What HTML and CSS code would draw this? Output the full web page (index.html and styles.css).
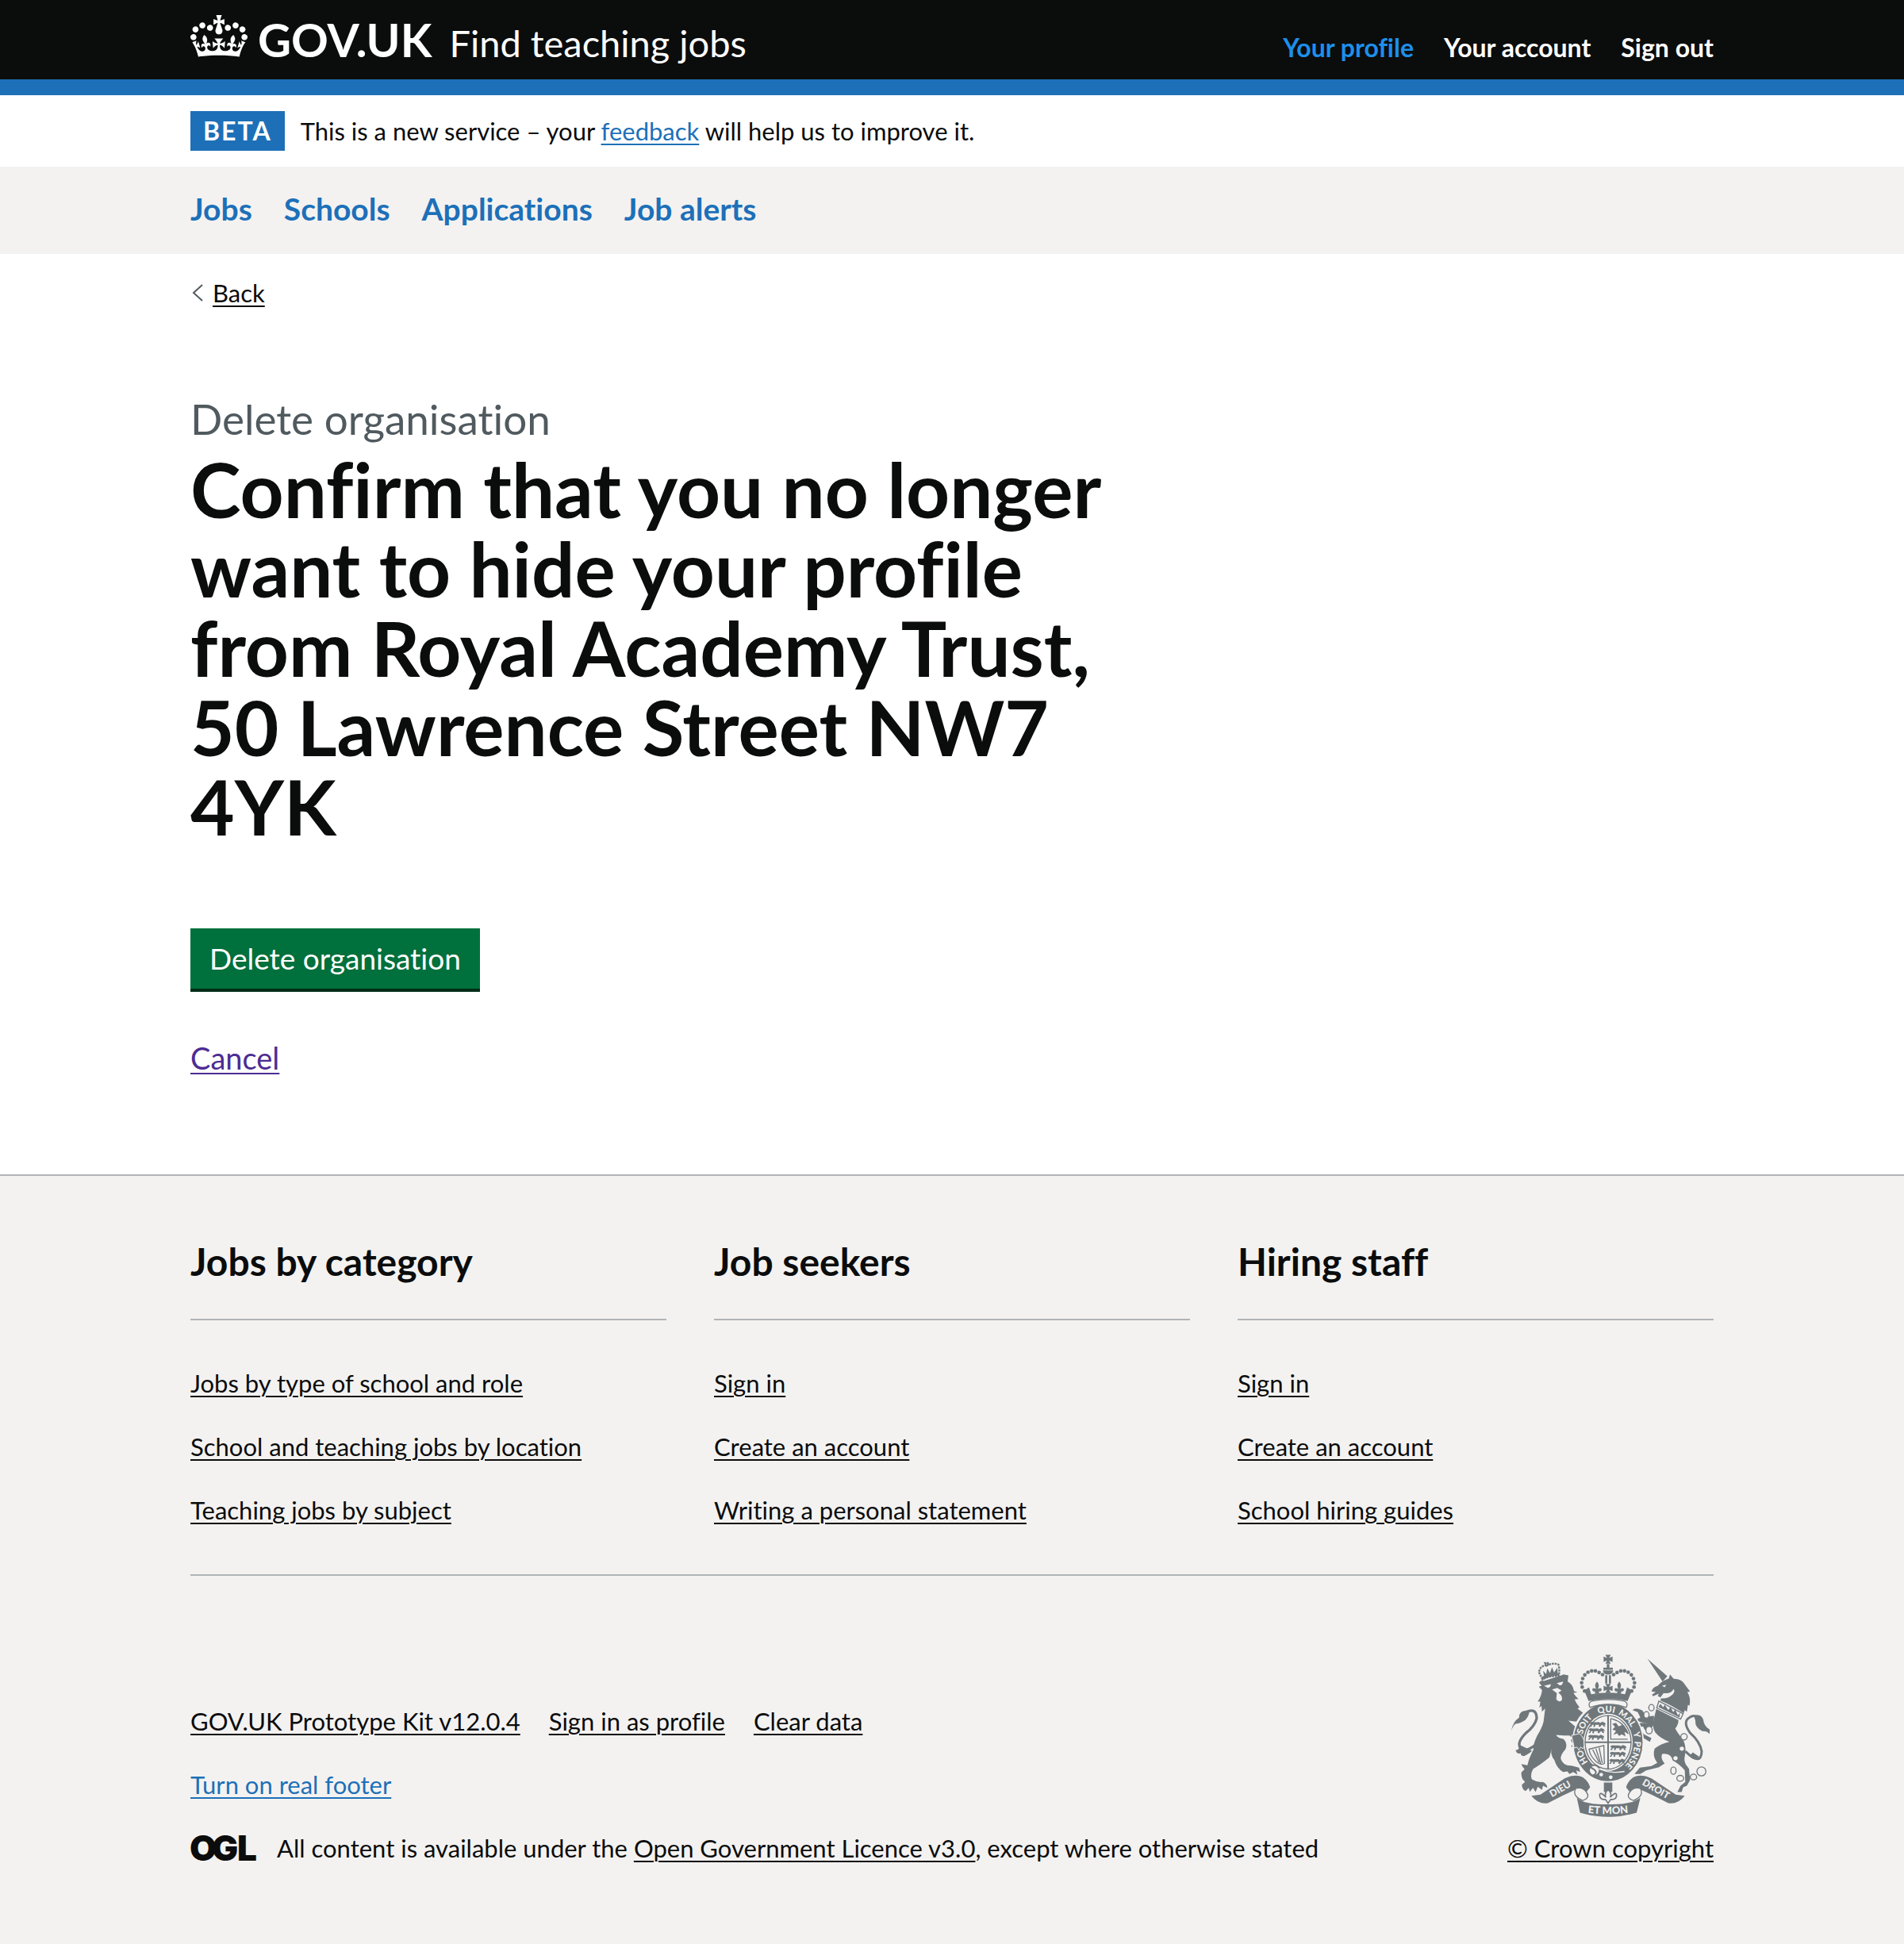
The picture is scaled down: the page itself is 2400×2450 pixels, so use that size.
FILE: index.html
```html
<!DOCTYPE html>
<html lang="en">
<head>
<meta charset="utf-8">
<meta name="viewport" content="width=device-width, initial-scale=1">
<title>Delete organisation – Find teaching jobs</title>
<link rel="stylesheet" href="styles.css">
</head>
<body>
<header class="header">
  <div class="container header-row">
    <a class="logo" href="#">
      <svg class="logo-crown" viewBox="0 0 132 97" aria-hidden="true" fill="currentColor"><path d="M25 30.2c3.5 1.5 7.7-.2 9.1-3.7 1.5-3.6-.2-7.8-3.9-9.2-3.6-1.4-7.6.3-9.1 3.9-1.4 3.5.3 7.5 3.9 9zM9 39.5c3.6 1.5 7.8-.2 9.2-3.7 1.5-3.6-.2-7.8-3.9-9.1-3.6-1.5-7.6.2-9.1 3.8-1.4 3.5.3 7.5 3.8 9zM4.4 57.2c3.5 1.5 7.7-.2 9.1-3.8 1.5-3.6-.2-7.7-3.9-9.1-3.5-1.5-7.6.3-9.1 3.8-1.4 3.5.3 7.6 3.9 9.1zm38.3-21.4c3.5 1.5 7.7-.2 9.1-3.8 1.5-3.6-.2-7.7-3.9-9.1-3.6-1.5-7.6.3-9.1 3.8-1.3 3.6.4 7.7 3.9 9.1zm64.4-5.6c-3.6 1.5-7.8-.2-9.1-3.7-1.5-3.6.2-7.8 3.8-9.2 3.6-1.4 7.7.3 9.2 3.9 1.3 3.5-.4 7.5-3.9 9zm15.9 9.3c-3.6 1.5-7.7-.2-9.1-3.7-1.5-3.6.2-7.8 3.7-9.1 3.6-1.5 7.7.2 9.2 3.8 1.5 3.5-.3 7.5-3.8 9zm4.7 17.7c-3.6 1.5-7.8-.2-9.2-3.8-1.5-3.6.2-7.7 3.9-9.1 3.6-1.5 7.7.3 9.2 3.8 1.3 3.5-.4 7.6-3.9 9.1zM89.3 35.8c-3.6 1.5-7.8-.2-9.2-3.8-1.4-3.6.2-7.7 3.9-9.1 3.6-1.5 7.7.3 9.2 3.8 1.4 3.6-.3 7.7-3.9 9.1zM69.7 17.7l8.9 4.7V9.3l-8.9 2.8c-.2-.3-.5-.6-.9-.9L72.4 0H59.6l3.5 11.2c-.3.3-.6.5-.9.9l-8.8-2.8v13.1l8.8-4.7c.3.3.6.7.9.9l-5 15.4v.1c-.2.8-.4 1.6-.4 2.4 0 4.1 3.1 7.5 7 8.1h.2c.3 0 .7.1 1 .1.4 0 .7 0 1-.1h.2c4-.6 7.1-4.1 7.1-8.1 0-.8-.1-1.7-.4-2.4V34l-5.1-15.4c.4-.2.7-.6 1-.9zM66 92.8c16.9 0 32.8 1.1 47.1 3.2 4-16.9 8.9-26.7 14-33.5l-9.6-3.4c1 4.9 1.1 7.2 0 10.2-1.5-1.4-3-4.3-4.2-8.7L108.6 76c2.8-2 5-3.2 7.5-3.3-4.4 9.4-10 11.9-13.6 11.2-4.3-.8-6.3-4.6-5.6-7.9 1-4.7 5.7-5.9 8-.5 4.3-8.7-3-11.4-7.6-8.8 7.1-7.2 7.9-13.5 2.1-21.1-8 6.1-8.1 12.3-4.5 20.8-4.7-5.4-12.1-2.5-9.5 6.2 3.4-5.2 7.9-2 7.2 3.1-.6 4.3-6.4 7.8-13.5 7.2-10.3-.9-10.9-8-11.2-13.8 2.5-.5 7.1 1.8 11 7.3L80.2 60c-4.1 4.4-8 5.3-12.3 5.4 1.4-4.4 8-11.6 8-11.6H55.5s6.4 7.2 7.9 11.6c-4.2-.1-8-1-12.3-5.4l1.4 16.4c3.9-5.5 8.5-7.7 10.9-7.3-.3 5.8-.9 12.8-11.1 13.8-7.2.6-12.9-2.9-13.5-7.2-.7-5 3.8-8.3 7.1-3.1 2.7-8.7-4.6-11.6-9.4-6.2 3.7-8.5 3.6-14.7-4.6-20.8-5.8 7.6-5 13.9 2.2 21.1-4.7-2.6-11.9.1-7.7 8.8 2.3-5.5 7.1-4.2 8.1.5.7 3.3-1.3 7.1-5.7 7.9-3.5.7-9-1.8-13.5-11.2 2.5.1 4.7 1.3 7.5 3.3l-4.7-15.4c-1.2 4.4-2.7 7.2-4.3 8.7-1.1-3-.9-5.3 0-10.2l-9.5 3.4c5 6.9 9.9 16.7 14 33.5 14.8-2.1 30.8-3.2 47.7-3.2z"/></svg>
      <span class="logo-text">GOV.UK</span>
    </a>
    <a class="service-name" href="#">Find teaching jobs</a>
    <nav class="account-nav" aria-label="Account">
      <a class="account-link account-link-current" href="#">Your profile</a>
      <a class="account-link" href="#">Your account</a>
      <a class="account-link" href="#">Sign out</a>
    </nav>
  </div>
</header>

<div class="container phase-banner">
  <strong class="tag">BETA</strong>
  <span>This is a new service – your <a class="link" href="#">feedback</a> will help us to improve it.</span>
</div>

<nav class="primary-nav" aria-label="Primary">
  <div class="container primary-nav-row">
    <a class="primary-link" href="#">Jobs</a>
    <a class="primary-link" href="#">Schools</a>
    <a class="primary-link" href="#">Applications</a>
    <a class="primary-link" href="#">Job alerts</a>
  </div>
</nav>

<div class="container">
  <div class="back">
    <svg class="back-icon" viewBox="0 0 14 22" aria-hidden="true"><path d="M13 1 2 11l11 10" fill="none" stroke="#505a5f" stroke-width="2"/></svg>
    <a class="link link-plain" href="#">Back</a>
  </div>
  <main class="main">
    <p class="caption">Delete organisation</p>
    <h1 class="title">Confirm that you no longer want to hide your profile from Royal Academy Trust, 50 Lawrence Street NW7 4YK</h1>
    <button class="button" type="button">Delete organisation</button>
    <p class="cancel"><a class="link link-visited" href="#">Cancel</a></p>
  </main>
</div>

<footer class="footer">
  <div class="container">
    <div class="footer-nav">
      <section>
        <h2 class="footer-heading">Jobs by category</h2>
        <ul class="footer-list">
          <li><a class="link link-plain" href="#">Jobs by type of school and role</a></li>
          <li><a class="link link-plain" href="#">School and teaching jobs by location</a></li>
          <li><a class="link link-plain" href="#">Teaching jobs by subject</a></li>
        </ul>
      </section>
      <section>
        <h2 class="footer-heading">Job seekers</h2>
        <ul class="footer-list">
          <li><a class="link link-plain" href="#">Sign in</a></li>
          <li><a class="link link-plain" href="#">Create an account</a></li>
          <li><a class="link link-plain" href="#">Writing a personal statement</a></li>
        </ul>
      </section>
      <section>
        <h2 class="footer-heading">Hiring staff</h2>
        <ul class="footer-list">
          <li><a class="link link-plain" href="#">Sign in</a></li>
          <li><a class="link link-plain" href="#">Create an account</a></li>
          <li><a class="link link-plain" href="#">School hiring guides</a></li>
        </ul>
      </section>
    </div>
    <div class="footer-meta">
      <div class="meta-main">
        <div class="meta-links">
          <a class="link link-plain" href="#">GOV.UK Prototype Kit v12.0.4</a>
          <a class="link link-plain" href="#">Sign in as profile</a>
          <a class="link link-plain" href="#">Clear data</a>
        </div>
        <div><a class="link" href="#">Turn on real footer</a></div>
        <div class="licence">
          <svg class="ogl" viewBox="0 0 84 36" role="img" aria-label="Open Government Licence"><text class="ogl-text" x="-1 27 59" y="34">OGL</text></svg>
          <span>All content is available under the <a class="link link-plain" href="#">Open Government Licence v3.0</a>, except where otherwise stated</span>
        </div>
      </div>
      <div class="copyright">
        <svg class="crest" viewBox="42 46 750 614" aria-hidden="true">
          <defs>
            <path id="garter" d="M408 492A100 114 0 0 1 408 264A100 114 0 0 1 408 492"/>
            <path id="motto" d="M318 643Q408 656 498 643"/>
            <g id="beads">
              <circle cx="319" cy="184" r="7"/><circle cx="310" cy="169" r="7"/><circle cx="308" cy="153" r="7"/><circle cx="312" cy="137" r="7"/><circle cx="320" cy="123" r="7"/><circle cx="332" cy="113" r="7"/><circle cx="346" cy="108" r="7"/><circle cx="360" cy="108" r="7"/><circle cx="374" cy="114" r="7"/><circle cx="387" cy="122" r="7"/>
            </g>
            <path id="fleur" d="M0-32Q-11-20-5-8L-4-3Q-16-12-18-1-16 8-7 5L-8 14H8L7 5Q16 8 18-1 16-12 4-3L5-8Q11-20 0-32z"/>
            <path id="cross" d="M-10-17H10L4-5 17-10V10L4 5 10 17H-10L-4 5-17 10V-10L-4-5z"/>
            <path id="beast" d="M-32-2Q-26-10-18-6L-4-6Q4-8 8-3L16-8 26-4 30 2 24 4 28 11 20 10 18 4 12 6 8 12 2 10 4 4-10 4-12 12-18 11-16 4-22 4-26 12-32 10-26 3z"/>
          </defs>
          <g fill="#6f777b">
            <!-- Lion -->
            <path d="M147 152Q156 142 165 146L228 126 240 121 258 125 255 148Q275 158 279 184L292 188 277 192Q286 206 296 214L281 216Q290 235 300 246L292 250 313 266Q298 280 288 300L258 296 288 322 302 345Q316 358 319 385L318 398 306 404 292 400 284 408 285 392 268 396 274 384 268 372 272 360 262 352 240 352 212 350Q213 360 240 366 256 384 247 404 228 425 229 440 238 468 270 466L298 474 303 490 288 484 292 500 276 490 262 498 254 488 238 490Q214 476 205 445 188 425 195 402L186 435Q150 465 125 478 112 500 120 518 140 530 160 528 178 535 178 550L162 542 158 558 142 546 134 566 124 550 112 565 108 550 96 562Q82 555 82 538L94 528Q78 515 80 492L92 480Q82 468 80 460L103 465Q108 440 126 405 122 390 140 352 158 325 164 300L170 250 158 262 156 240 148 248 152 224 142 224Q158 200 158 180L146 168 157 164z"/>
            <path d="M42 334Q48 300 72 284 70 270 82 262 100 254 110 264 108 280 95 294 78 306 58 308 48 316 42 334z"/>
            <path d="M98 263Q138 246 138 288 130 318 98 342 62 378 76 398 92 424 148 376" fill="none" stroke="#6f777b" stroke-width="10"/>
            <path d="M78 390Q66 412 58 406 62 424 78 420 76 430 90 430 112 420 120 410z"/>
            <path d="M160 140L146 112 152 98Q160 88 175 86L170 78H184L180 86Q200 76 220 84L224 100 222 128Q190 124 160 140z" fill="none" stroke="#6f777b" stroke-width="7" stroke-dasharray="8 3"/>
            <path d="M160 142L158 130Q188 112 222 118L224 126Q190 126 160 142zM166 128L162 108 174 120 178 98 188 116 196 94 204 114 216 96 218 120z"/>
            <!-- Unicorn -->
            <path d="M557 62L632 128 614 148z"/>
            <path d="M618 145L638 136 642 121 656 138Q688 138 700 162L718 186 708 188Q722 212 716 240L710 236 706 262 698 256 694 268Q650 238 606 220L608 212Q645 212 657 190 660 182 656 176 646 196 618 192L606 208 596 203 600 194 578 204 574 198 588 188 572 186Q576 170 596 164L608 152z"/>
            <path d="M600 222L692 270 682 290 592 248z" fill="none" stroke="#6f777b" stroke-width="4"/>
            <path d="M598 244L606 232 616 246 622 236 636 256 644 244 654 264 662 254 672 276 680 266 678 284z"/>
            <path d="M590 252L674 294Q674 312 662 326 672 345 692 368 706 400 698 432 694 446 702 462L714 478 718 520 706 542 692 548 686 566 670 566 682 542 700 528 698 484Q680 462 652 446 646 418 612 422 606 440 622 458L600 472 552 484 530 498 508 498 528 474 572 468 594 456Q574 430 584 402 604 384 640 376 604 362 586 340 572 318 582 286z"/>
            <path d="M500 256Q514 244 538 258L552 280 582 278 580 312 548 304Q524 302 516 292L530 284 520 264z"/>
            <path d="M582 308Q560 350 546 330L540 318 524 322 544 348 572 362 566 376 532 356 512 332 520 306 546 304z"/>
            <path d="M700 412Q760 470 762 412 756 376 718 342 688 300 716 284 740 268 752 296" fill="none" stroke="#6f777b" stroke-width="9"/>
            <path d="M732 276Q760 268 768 292 770 316 792 330V346Q780 334 764 336 736 322 738 296zM716 430L728 416 752 432Q736 452 716 430z"/>
            <!-- Ribbon -->
            <path d="M118 580L152 576 244 514Q285 496 312 510 334 526 340 548L326 566Q310 544 286 556 236 578 180 608 142 612 118 580zM698 580L664 576 572 514Q531 496 504 510 482 526 476 548L490 566Q506 544 530 556 580 578 636 608 674 612 698 580zM290 588Q310 606 350 610 408 615 466 610 506 606 530 588L516 644Q460 660 408 660 356 660 302 644z"/>
            <path d="M312 598Q270 580 286 552 312 546 326 566 342 588 312 598zM504 598Q546 580 530 552 504 546 490 566 474 588 504 598z" fill="#f3f2f1" stroke="#6f777b" stroke-width="4"/>
            <!-- Garter -->
            <ellipse cx="408" cy="378" rx="133" ry="149" stroke="#f3f2f1" stroke-width="5"/>
            <path d="M392 530H424V566H392z"/>
            <path d="M270 352L300 345Q318 360 320 388L314 402 304 396 298 408 290 396 280 400z" stroke="#f3f2f1" stroke-width="3"/>
          </g>
          <path d="M408 556Q392 572 400 586 376 560 376 580 378 596 398 594L408 608 418 594Q438 596 440 580 440 560 416 586 424 572 408 556z" fill="#f3f2f1" stroke="#6f777b" stroke-width="5"/>
          <ellipse cx="408" cy="378" rx="93" ry="108" fill="#f3f2f1"/>
          <ellipse cx="408" cy="378" rx="87" ry="101" fill="none" stroke="#6f777b" stroke-width="4"/>
          <path d="M408 276V480M320 378H496" stroke="#6f777b" stroke-width="6"/>
          <g fill="#6f777b">
            <use href="#beast" x="370" y="308"/><use href="#beast" x="366" y="332"/><use href="#beast" x="364" y="357"/>
            <use href="#beast" x="448" y="396"/><use href="#beast" x="446" y="421"/><use href="#beast" x="444" y="448"/>
            <path d="M424 308L438 304 448 318 462 312 478 330 484 346 470 338 474 356 460 348 450 354 442 344 428 350 438 334 424 330 434 320z"/>
          </g>
          <path d="M418 288V366H482M418 288Q466 298 484 346M336 404L392 390 394 458Q380 466 364 452 340 430 336 404zM350 406L374 454M362 402L380 458M374 398L386 456" fill="none" stroke="#6f777b" stroke-width="4"/>
          <circle cx="356" cy="484" r="20" fill="#f3f2f1" stroke="#6f777b" stroke-width="6"/>
          <path d="M336 470Q380 490 350 504" fill="none" stroke="#6f777b" stroke-width="6"/>
          <path d="M372 478Q420 498 470 488" fill="none" stroke="#f3f2f1" stroke-width="4"/>
          <g fill="#f3f2f1">
            <circle cx="382" cy="500" r="7"/><circle cx="418" cy="510" r="7"/>
            <path d="M166 164L192 158Q190 172 180 172zM214 154L238 148Q236 164 224 162zM196 178L216 172 232 182 220 190Q240 205 232 220 218 228 212 214L214 192z"/>
            <path d="M612 164L628 160 622 170z"/>
          </g>
          <g class="crest-text">
            <text><textPath href="#garter" startOffset="17%">HO</textPath></text>
            <text><textPath href="#garter" startOffset="35%">SOIT</textPath></text>
            <text><textPath href="#garter" startOffset="49%">QUI</textPath></text>
            <text><textPath href="#garter" startOffset="61%">MAL</textPath></text>
            <text><textPath href="#garter" startOffset="71%">Y</textPath></text>
            <text><textPath href="#garter" startOffset="82%">PENSE</textPath></text>
            <text class="crest-motto"><textPath href="#motto" startOffset="50%">ET MON</textPath></text>
            <text class="crest-side" transform="translate(233 565) rotate(-30)">DIEU</text>
            <text class="crest-side" transform="translate(583 565) rotate(30)">DROIT</text>
          </g>
          <!-- Crown -->
          <g fill="#6f777b">
            <use href="#beads"/>
            <use href="#beads" transform="matrix(-1 0 0 1 816 0)"/>
            <use href="#cross" x="408" y="64"/>
            <path d="M403 82H413V96H426V104H390V96H403zM388 106H428Q424 122 408 122 392 122 388 106zM397 124H405V156H397zM411 124H419V156H411z"/>
            <use href="#cross" x="408" y="174"/>
            <use href="#fleur" x="366" y="180"/>
            <use href="#fleur" x="450" y="180"/>
            <path d="M334 222L318 182 336 170 344 196Q408 184 472 196L480 170 498 182 482 222Q408 206 334 222z"/>
          </g>
          <path d="M346 222Q408 210 470 222 486 230 476 246 408 222 340 246 330 230 346 222z" fill="#f3f2f1" stroke="#6f777b" stroke-width="4"/>
          <!-- Chain -->
          <g fill="#f3f2f1" stroke="#6f777b" stroke-width="4">
            <ellipse cx="572" cy="247" rx="10" ry="12"/><ellipse cx="553" cy="274" rx="10" ry="12"/><ellipse cx="563" cy="332" rx="12" ry="14"/><circle cx="695" cy="357" r="12"/><circle cx="687" cy="402" r="10"/><circle cx="663" cy="438" r="10"/><ellipse cx="655" cy="485" rx="10" ry="14"/><ellipse cx="681" cy="514" rx="13" ry="11"/><ellipse cx="731" cy="509" rx="12" ry="11"/><circle cx="761" cy="488" r="17"/>
          </g>
        </svg>
        <a class="link link-plain" href="#">© Crown copyright</a>
      </div>
    </div>
  </div>
</footer>
</body>
</html>
```
FILE: styles.css
```css
* { box-sizing: border-box; }

body {
  margin: 0;
  background: #fff;
  color: #0b0c0c;
  font: 31px/40px Lato, "Liberation Sans", sans-serif;
  font-variant-ligatures: none;
}

h1, h2, p, ul { margin: 0; padding: 0; }
ul { list-style: none; }

.container {
  width: 80%;
  max-width: 1920px;
  margin: 0 auto;
}

.link {
  color: #1d70b8;
  text-decoration: underline;
  text-decoration-thickness: 2px;
  text-underline-offset: 4px;
}
.link-plain { color: #0b0c0c; }
.link-visited { color: #4c2c92; }

/* Header */
.header {
  background: #0b0c0c;
  border-bottom: 20px solid #1d70b8;
  color: #fff;
}
.header-row {
  display: flex;
  align-items: baseline;
  padding: 19px 0 16px;
}
.header a { color: #fff; text-decoration: none; }
.logo {
  display: flex;
  align-items: baseline;
  gap: 13px;
  font-size: 58px;
  line-height: 60px;
  font-weight: 700;
}
.logo-crown { width: 72px; height: 53px; margin-bottom: -4px; }
.service-name { margin-left: 22px; font-size: 47px; line-height: 60px; }
.account-nav {
  display: flex;
  gap: 38px;
  margin-left: auto;
  font-size: 32px;
  font-weight: 700;
}
.header .account-link-current { color: #1d8feb; }

/* Phase banner */
.phase-banner {
  display: flex;
  align-items: center;
  gap: 20px;
  padding: 20px 0;
}
.tag {
  padding: 0 16px;
  background: #1d70b8;
  color: #fff;
  font-size: 32px;
  line-height: 50px;
  letter-spacing: 2px;
}

/* Primary navigation */
.primary-nav { background: #f3f2f1; }
.primary-nav-row {
  display: flex;
  flex-wrap: wrap;
  gap: 40px;
  padding: 26px 0 30px;
  font-size: 39px;
  line-height: 54px;
  font-weight: 700;
}
.primary-link { color: #1d70b8; text-decoration: none; }

/* Main content */
.back {
  display: flex;
  align-items: center;
  gap: 12px;
  padding: 29px 0 0 2px;
}
.back-icon { width: 14px; height: 22px; }
.main { max-width: 1260px; padding: 109px 0 122px; }
.caption { margin-bottom: 8px; color: #505a5f; font-size: 53px; line-height: 60px; }
.title { font-size: 96px; line-height: 100px; font-weight: 700; }
.button {
  display: block;
  margin-top: 104px;
  padding: 0 24px;
  border: 0;
  border-bottom: 4px solid #002d18;
  background: #00703c;
  color: #fff;
  font: inherit;
  font-size: 37px;
  line-height: 76px;
}
.cancel { margin-top: 58px; font-size: 38px; line-height: 50px; }

/* Footer */
.footer {
  border-top: 2px solid #b1b4b6;
  background: #f3f2f1;
  padding: 78px 0 101px;
}
.footer-nav {
  display: grid;
  grid-template-columns: repeat(3, 1fr);
  gap: 60px;
  padding-bottom: 61px;
  border-bottom: 2px solid #b1b4b6;
}
.footer-heading {
  padding-bottom: 42px;
  border-bottom: 2px solid #b1b4b6;
  font-size: 48px;
  line-height: 60px;
  font-weight: 700;
}
.footer-list {
  display: grid;
  gap: 40px;
  margin-top: 59px;
}
.footer-meta {
  display: flex;
  justify-content: space-between;
  align-items: flex-end;
  padding-top: 99px;
}
.meta-main { display: grid; gap: 40px; }
.meta-links { display: flex; gap: 36px; }
.licence { display: flex; align-items: center; gap: 25px; }
.ogl { width: 84px; height: 36px; flex: none; }
.ogl-text { font-family: Inter, sans-serif; font-size: 44px; font-weight: 900; fill: #0b0c0c; }
.copyright {
  display: flex;
  flex-direction: column;
  align-items: center;
  gap: 19px;
}
.crest { width: 250px; height: 205px; }
.crest-text { fill: #f3f2f1; font-size: 33px; font-weight: 900; text-anchor: middle; }
.crest-side { font-size: 36px; }
.crest-motto { font-size: 39px; }
```
